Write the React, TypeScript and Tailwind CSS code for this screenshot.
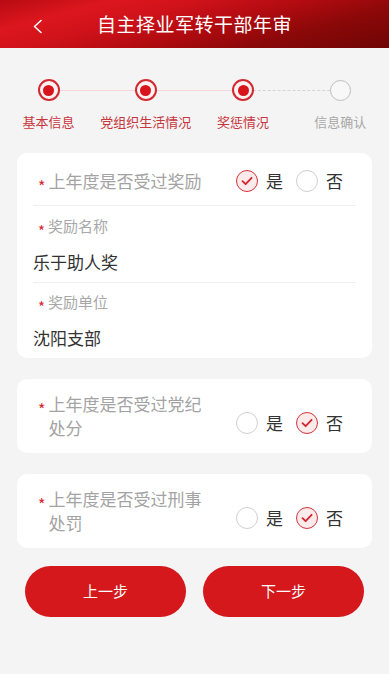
const steps = [
  { label: "基本信息", done: true },
  { label: "党组织生活情况", done: true },
  { label: "奖惩情况", done: true },
  { label: "信息确认", done: false },
];

function Radio({ checked, text }: { checked: boolean; text: string }) {
  return (
    <div className="flex items-center">
      {checked ? (
        <span className="flex h-[22px] w-[22px] items-center justify-center rounded-full border-[1.5px] border-[#d1343b] bg-[#fdeaea]">
          <svg width="12" height="10" viewBox="0 0 12 10" fill="none">
            <path d="M1.5 5.2 L4.6 8.2 L10.6 1.8" stroke="#d1262d" strokeWidth="1.8" strokeLinecap="round" strokeLinejoin="round" />
          </svg>
        </span>
      ) : (
        <span className="h-[22px] w-[22px] rounded-full border border-[#cfcfcf] bg-white" />
      )}
      <span className="ml-[8px] text-[17px] leading-[24px] text-[#333]">{text}</span>
    </div>
  );
}

function YesNo({ yes }: { yes: boolean }) {
  return (
    <div className="mr-[13px] flex items-center gap-[13px]">
      <Radio checked={yes} text="是" />
      <Radio checked={!yes} text="否" />
    </div>
  );
}

// red asterisk sits a little below the middle of the label line
function Star() {
  return <span className="mr-[3px] h-[24px] overflow-visible pt-[9px] text-[16px] leading-[16px] text-[#d7262d]">*</span>;
}

function SmallStar() {
  return <span className="mr-[3px] h-[16px] overflow-visible pt-[5px] text-[15px] leading-[15px] text-[#d7262d]">*</span>;
}

function QuestionCard({ text, yes }: { text: string; yes: boolean }) {
  return (
    <div className="flex items-center justify-between rounded-[10px] bg-white px-[16px] py-[13px]">
      <div className="flex items-start pl-[5px]">
        <Star />
        <span className="w-[160px] text-[17px] leading-[24px] text-[#a3a3a3]">{text}</span>
      </div>
      <div className="mt-[13px]">
        <YesNo yes={yes} />
      </div>
    </div>
  );
}

export default function App() {
  return (
    <div
      className="min-h-screen bg-[#f4f4f4]"
      style={{ fontFamily: '"Noto Sans CJK SC", "Noto Sans", sans-serif' }}
    >
      <header className="relative flex h-[48px] items-center justify-center bg-[linear-gradient(165deg,#b80b12_0%,#dc161e_20%,#d0121a_35%,#b00b10_55%,#8a0808_75%,#700505_100%)]">
        <svg className="absolute left-[32px] top-[19px]" width="11" height="15" viewBox="0 0 11 15" fill="none">
          <path d="M9 1.5 L2.5 7.5 L9 13.5" stroke="white" strokeWidth="1.6" strokeLinecap="round" strokeLinejoin="round" />
        </svg>
        <h1 className="text-[19px] leading-[24px] tracking-[0.5px] text-white">自主择业军转干部年审</h1>
      </header>

      <div className="grid grid-cols-4 pt-[31px]">
        {steps.map((step, index) => (
          <div key={step.label} className="flex flex-col items-center">
            <div className="relative flex h-[22px] w-full items-center justify-center">
              {index < steps.length - 1 && (
                <div
                  className={`absolute left-1/2 top-1/2 w-full ${
                    steps[index + 1].done ? "border-t border-[#f6d6d6]" : "border-t border-dashed border-[#d4d4d4]"
                  }`}
                />
              )}
              {step.done ? (
                <span className="relative z-10 flex h-[22px] w-[22px] items-center justify-center rounded-full border-2 border-[#d22a31] bg-[#fdf1f1]">
                  <span className="h-[11px] w-[11px] rounded-full bg-[#d8141c]" />
                </span>
              ) : (
                <span className="relative z-10 h-[21px] w-[21px] rounded-full border-[1.5px] border-[#bdbdbd] bg-[#f8f8f8]" />
              )}
            </div>
            <span className={`mt-[13px] text-[13px] leading-[16px] ${step.done ? "text-[#c8363d]" : "text-[#a8a8a8]"}`}>
              {step.label}
            </span>
          </div>
        ))}
      </div>

      <div className="flex flex-col gap-[21px] px-[17px] pt-[23px]">
        <div className="rounded-[10px] bg-white px-[16px]">
          <div className="flex items-center justify-between border-b border-[#eeeeee] pb-[12px] pt-[16px]">
            <div className="flex items-start pl-[5px]">
              <Star />
              <span className="text-[17px] leading-[24px] text-[#a3a3a3]">上年度是否受过奖励</span>
            </div>
            <YesNo yes={true} />
          </div>
          <div className="border-b border-[#eeeeee] pb-[8px] pt-[12px]">
            <div className="flex items-start pl-[5px]">
              <SmallStar />
              <span className="text-[15px] leading-[16px] text-[#a8a8a8]">奖励名称</span>
            </div>
            <div className="mt-[16px] text-[17px] leading-[24px] text-[#333]">乐于助人奖</div>
          </div>
          <div className="pb-[8px] pt-[11px]">
            <div className="flex items-start pl-[5px]">
              <SmallStar />
              <span className="text-[15px] leading-[16px] text-[#a8a8a8]">奖励单位</span>
            </div>
            <div className="mt-[16px] text-[17px] leading-[24px] text-[#333]">沈阳支部</div>
          </div>
        </div>

        <QuestionCard text="上年度是否受过党纪处分" yes={false} />
        <QuestionCard text="上年度是否受过刑事处罚" yes={false} />
      </div>

      <div className="mt-[18px] flex gap-[17px] px-[25px]">
        <button className="h-[51px] flex-1 rounded-full bg-[#d4181c] text-[15px] text-white">上一步</button>
        <button className="h-[51px] flex-1 rounded-full bg-[#d4181c] text-[15px] text-white">下一步</button>
      </div>
    </div>
  );
}
